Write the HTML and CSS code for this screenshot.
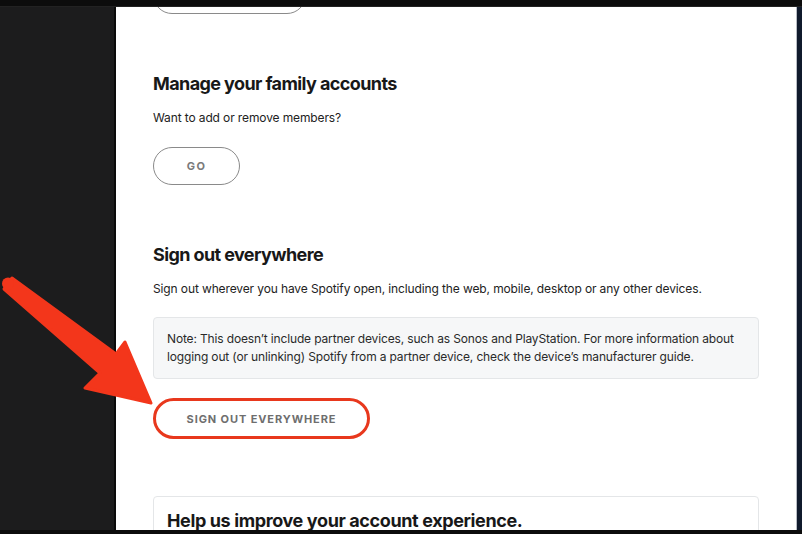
FILE: index.html
```html
<!DOCTYPE html>
<html>
    <head>
        <title>Account overview</title>
        <link rel="stylesheet" href="styles.css">
    </head>
    <body>
        <div class="screen">
            <div class="topbar"></div>
            <div class="frame">
                <div class="sidebar"></div>
                <div class="main">
                    <div class="pill pill-top"></div>

                    <div class="section section-family">
                        <h2>Manage your family accounts</h2>
                        <p>Want to add or remove members?</p>
                        <button class="pill pill-go" type="button">GO</button>
                    </div>

                    <div class="section section-signout">
                        <h2>Sign out everywhere</h2>
                        <p>Sign out wherever you have Spotify open, including the web, mobile, desktop or any other devices.</p>
                        <div class="note">Note: This doesn’t include partner devices, such as Sonos and PlayStation. For more information about logging out (or unlinking) Spotify from a partner device, check the device’s manufacturer guide.</div>
                        <button class="pill pill-signout" type="button">SIGN OUT EVERYWHERE</button>
                    </div>

                    <div class="card">
                        <h2>Help us improve your account experience.</h2>
                    </div>
                </div>
                <div class="edge"></div>
            </div>
            <div class="bottombar"></div>

            <svg class="arrow" width="160" height="420" viewBox="0 0 160 420">
                <path d="M12 278 L116 354 L125 342 L151 403 L85 388 L100 373 L4 289 Z" fill="#f3361b" stroke="#f3361b" stroke-width="3" stroke-linejoin="round"/>
                <circle cx="8" cy="283.5" r="6" fill="#f3361b"/>
            </svg>
        </div>
    </body>
</html>
```

FILE: styles.css
```css
html, body {
    margin: 0;
    padding: 0;
    background: #111;
}
.screen {
    position: relative;
    width: 802px;
    height: 534px;
    overflow: hidden;
    display: flex;
    flex-direction: column;
    font-family: "Inter", "Noto Sans", sans-serif;
    color: #181818;
}
.topbar {
    height: 6px;
    background: #0c0c0c;
    border-bottom: 1px solid #222;
}
.bottombar {
    height: 4px;
    background: #0c0c0c;
}
.frame {
    flex: 1;
    display: flex;
    min-height: 0;
}
.sidebar {
    width: 114px;
    background: #1c1c1d;
    border-right: 2px solid #0a0a0a;
}
.edge {
    width: 5px;
    background: #101a2c;
    border-left: 1px solid #b8bcc4;
}
.main {
    flex: 1;
    background: #fff;
    padding: 0 37px;
    overflow: hidden;
}
.pill {
    display: block;
    box-sizing: border-box;
    background: #fff;
    border: 1.5px solid #8a8a8a;
    border-radius: 999px;
    font-family: inherit;
    font-size: 11px;
    font-weight: 700;
    letter-spacing: 1.4px;
    color: #7a7a7a;
    padding: 0;
}
.pill-top {
    width: 153px;
    height: 38px;
    margin-top: -31px;
}
.pill-go {
    width: 87px;
    height: 38px;
    margin-top: 21px;
}
.pill-signout {
    width: 217px;
    height: 41px;
    margin-top: 19px;
    border: 3px solid #e8381d;
    color: #6e6e6e;
    letter-spacing: 0.9px;
}
.section h2, .card h2 {
    margin: 0;
    font-size: 18px;
    line-height: 24px;
    font-weight: 700;
    letter-spacing: -0.6px;
}
.card h2 {
    letter-spacing: -0.38px;
}
.section p {
    margin: 14px 0 0;
    font-size: 12px;
    line-height: 16px;
    letter-spacing: -0.12px;
    color: #222;
}
.section-family {
    margin-top: 58px;
}
.section-signout {
    margin-top: 58px;
}
.note {
    margin-top: 20px;
    background: #f6f7f8;
    border: 1px solid #e4e6e8;
    border-radius: 4px;
    padding: 12px 13px;
    font-size: 12px;
    line-height: 18px;
    letter-spacing: -0.15px;
    color: #2a2a2a;
}
.card {
    margin-top: 57px;
    border: 1px solid #e4e6e8;
    border-radius: 4px;
    padding: 12px 13px 20px;
}
.arrow {
    position: absolute;
    left: 0;
    top: 0;
}
```
